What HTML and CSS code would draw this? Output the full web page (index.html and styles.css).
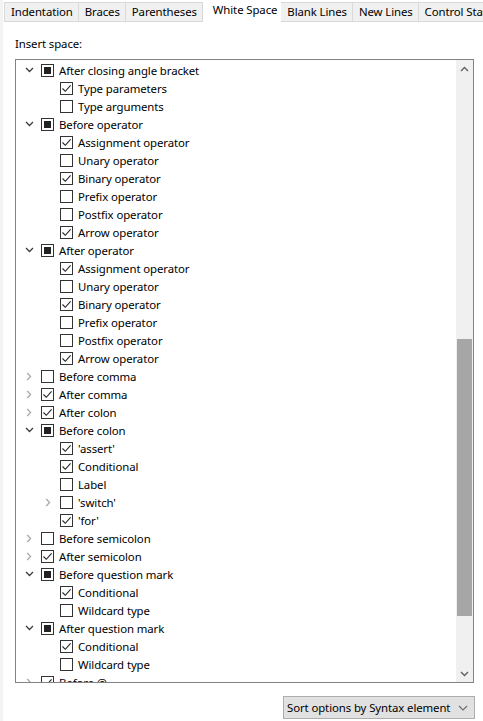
FILE: index.html
```html
<!DOCTYPE html>
<html>
<head>
<meta charset="utf-8">
<link rel="stylesheet" href="styles.css">
</head>
<body>
<div class="page">
  <div class="tabs">
    <div class="tab">Indentation</div>
    <div class="tab">Braces</div>
    <div class="tab">Parentheses</div>
    <div class="tab active">White Space</div>
    <div class="tab">Blank Lines</div>
    <div class="tab">New Lines</div>
    <div class="tab last">Control Statements</div>
  </div>
  <div class="content">
    <div class="label">Insert space:</div>
    <div class="tree">
      <div class="list" id="list"></div>
      <div class="scrollbar">
        <div class="sb-btn"><svg width="9" height="6" viewBox="0 0 9 6"><path d="M1 5 L4.5 1.5 L8 5" fill="none" stroke="#606060" stroke-width="1.4"/></svg></div>
        <div class="sb-track"><div class="sb-thumb"></div></div>
        <div class="sb-btn"><svg width="9" height="6" viewBox="0 0 9 6"><path d="M1 1 L4.5 4.5 L8 1" fill="none" stroke="#606060" stroke-width="1.4"/></svg></div>
      </div>
    </div>
    <div class="footer">
      <div class="select">
        <span class="select-text">Sort options by Syntax element</span>
        <svg width="10" height="6" viewBox="0 0 10 6"><path d="M1 1 L5 5 L9 1" fill="none" stroke="#6a6a6a" stroke-width="1.1"/></svg>
      </div>
    </div>
  </div>
</div>
<script src="app.js"></script>
</body>
</html>
```

FILE: app.js
```js
var rows = [
  [0,'open','mixed','After closing angle bracket'],
  [1,'','on','Type parameters'],
  [1,'','off','Type arguments'],
  [0,'open','mixed','Before operator'],
  [1,'','on','Assignment operator'],
  [1,'','off','Unary operator'],
  [1,'','on','Binary operator'],
  [1,'','off','Prefix operator'],
  [1,'','off','Postfix operator'],
  [1,'','on','Arrow operator'],
  [0,'open','mixed','After operator'],
  [1,'','on','Assignment operator'],
  [1,'','off','Unary operator'],
  [1,'','on','Binary operator'],
  [1,'','off','Prefix operator'],
  [1,'','off','Postfix operator'],
  [1,'','on','Arrow operator'],
  [0,'closed','off','Before comma'],
  [0,'closed','on','After comma'],
  [0,'closed','on','After colon'],
  [0,'open','mixed','Before colon'],
  [1,'','on',"'assert'"],
  [1,'','on','Conditional'],
  [1,'','off','Label'],
  [1,'closed','off',"'switch'"],
  [1,'','on',"'for'"],
  [0,'closed','off','Before semicolon'],
  [0,'closed','on','After semicolon'],
  [0,'open','mixed','Before question mark'],
  [1,'','on','Conditional'],
  [1,'','off','Wildcard type'],
  [0,'open','mixed','After question mark'],
  [1,'','on','Conditional'],
  [1,'','off','Wildcard type'],
  [0,'closed','on','Before @']
];
var openSvg = '<svg width="9" height="6" viewBox="0 0 9 6"><path d="M1 1 L4.5 4.5 L8 1" fill="none" stroke="#3c3c3c" stroke-width="1.3"/></svg>';
var closedSvg = '<svg width="6" height="9" viewBox="0 0 6 9"><path d="M1.2 1 L4.6 4.5 L1.2 8" fill="none" stroke="#a6a6a6" stroke-width="1.2"/></svg>';
var checkSvg = '<svg width="11" height="11" viewBox="0 0 11 11"><path d="M1.5 5.5 L4.3 8.3 L9.6 2.4" fill="none" stroke="#222" stroke-width="1.1"/></svg>';
var html = '';
rows.forEach(function (r) {
  var tw = r[1] === 'open' ? openSvg : (r[1] === 'closed' ? closedSvg : '');
  var box = r[2] === 'on' ? checkSvg : (r[2] === 'mixed' ? '<span class="fill"></span>' : '');
  html += '<div class="row l' + r[0] + '"><span class="twisty">' + tw + '</span><span class="cb">' + box + '</span><span class="txt">' + r[3] + '</span></div>';
});
document.getElementById('list').innerHTML = html;
```

FILE: styles.css
```css
* { box-sizing: border-box; }
html, body { margin: 0; padding: 0; }
body {
  font-family: "Noto Sans", "Open Sans", sans-serif;
  font-size: 11.4px;
  letter-spacing: -0.1px;
  color: #000;
  background: #fff;
  width: 483px;
  height: 721px;
  overflow: hidden;
}
.page {
  height: 721px;
  display: flex;
  flex-direction: column;
  border-left: 3px solid #f3f3f3;
}
.tabs {
  display: flex;
  align-items: flex-end;
  height: 22px;
  padding-left: 1px;
  white-space: nowrap;
  overflow: hidden;
}
.tab {
  height: 20px;
  line-height: 18px;
  padding: 0 5px 0 6px;
  background: #f0f0f0;
  border: 1px solid #d9d9d9;
  border-left: none;
  flex: none;
}
.tab:first-child { border-left: 1px solid #d9d9d9; }
.tab.active {
  height: 22px;
  line-height: 20px;
  background: #fff;
  border: none;
  padding: 0 4px 0 10px;
}
.content {
  flex: 1;
  display: flex;
  flex-direction: column;
  padding: 0 9px 0 12px;
}
.label {
  height: 37px;
  line-height: 20px;
  padding-top: 12px;
}
.tree {
  height: 624px;
  border: 1px solid #838383;
  display: flex;
  background: #fff;
}
.list {
  flex: 1;
  padding-top: 1px;
  overflow: hidden;
}
.row {
  height: 18px;
  display: flex;
  align-items: center;
  white-space: nowrap;
}
.row.l0 { padding-left: 4px; }
.row.l1 { padding-left: 23px; }
.twisty {
  width: 18px;
  height: 18px;
  margin-right: 3px;
  display: flex;
  align-items: center;
  justify-content: center;
  flex: none;
}
.cb {
  width: 13px;
  height: 13px;
  border: 1px solid #333;
  background: #fff;
  margin-right: 5px;
  display: flex;
  align-items: center;
  justify-content: center;
  flex: none;
}
.cb .fill {
  width: 7px;
  height: 7px;
  background: #222;
}
.scrollbar {
  width: 17px;
  display: flex;
  flex-direction: column;
  background: #f0f0f0;
}
.sb-btn {
  height: 17px;
  display: flex;
  align-items: center;
  justify-content: center;
}
.sb-track {
  flex: 1;
  display: flex;
  flex-direction: column;
  justify-content: flex-end;
  padding-bottom: 49px;
}
.sb-thumb {
  height: 277px;
  margin: 0 1px;
  background: #a6a6a6;
}
.footer {
  flex: 1;
  display: flex;
  justify-content: flex-end;
  align-items: flex-start;
  padding-top: 13px;
}
.select {
  width: 192px;
  height: 23px;
  margin-right: -1px;
  background: #e1e1e1;
  border: 1px solid #adadad;
  display: flex;
  align-items: center;
  justify-content: space-between;
  padding: 0 6px 0 3px;
  white-space: nowrap;
}
```
